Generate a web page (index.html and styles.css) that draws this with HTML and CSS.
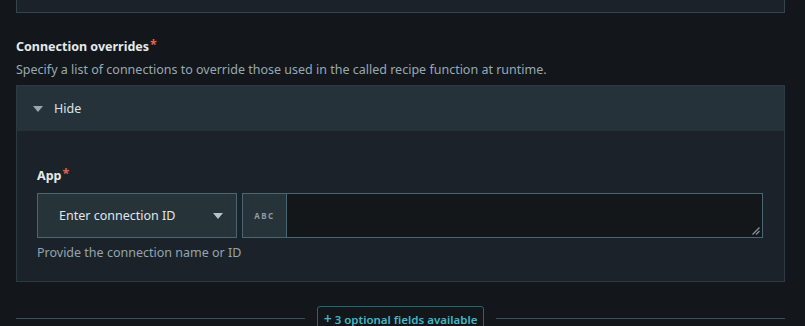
FILE: index.html
```html
<!DOCTYPE html>
<html>
<head>
<meta charset="utf-8">
<link rel="stylesheet" href="styles.css">
</head>
<body>
<div class="page">
  <div class="prev-box"></div>
  <div class="field-head">
    <div class="label">Connection overrides<span class="req">*</span></div>
    <div class="desc">Specify a list of connections to override those used in the called recipe function at runtime.</div>
  </div>
  <div class="accordion">
    <div class="acc-head">
      <svg class="tri" width="10" height="6" viewBox="0 0 10 6"><path d="M0 0H10L5 6Z" fill="#9aa7ae"/></svg>
      <span>Hide</span>
    </div>
    <div class="acc-body">
      <div class="label">App<span class="req">*</span></div>
      <div class="row">
        <div class="select">
          <span>Enter connection ID</span>
          <svg width="10" height="6" viewBox="0 0 10 6"><path d="M0 0H10L5 6Z" fill="#b9c3c9"/></svg>
        </div>
        <div class="group">
          <div class="prefix">ABC</div>
          <div class="textarea">
            <svg class="grip" width="9" height="9" viewBox="0 0 9 9"><path d="M8.5 1.5L1.5 8.5M8.5 5L5 8.5" stroke="#8a949a" stroke-width="1.2"/></svg>
          </div>
        </div>
      </div>
      <div class="hint">Provide the connection name or ID</div>
    </div>
  </div>
  <div class="more">
    <div class="line"></div>
    <div class="more-btn"><span class="plus">+</span> 3 optional fields available</div>
    <div class="line"></div>
  </div>
</div>
</body>
</html>
```
FILE: styles.css
```css
html, body {
  margin: 0;
  padding: 0;
  background: #13171b;
  height: 100%;
  overflow: hidden;
}
.page {
  padding: 0 20px 0 16px;
  font-family: "Noto Sans", "Open Sans", sans-serif;
  font-size: 12.5px;
  color: #dfe5e9;
}
.prev-box {
  height: 12px;
  background: #1c2229;
  border: 1px solid #344550;
  border-top: none;
}
.field-head {
  padding-top: 25px;
}
.label {
  font-weight: 700;
  font-size: 12.5px;
  line-height: 18px;
  color: #e4e9ec;
}
.req {
  color: #e4634e;
  margin-left: 1px;
  position: relative;
  top: -2px;
}
.desc {
  margin-top: 5px;
  line-height: 18px;
  color: #97a9b3;
}
.accordion {
  margin-top: 6px;
  border: 1px solid #2e3a42;
  background: #1c2229;
}
.acc-head {
  height: 45px;
  background: #263239;
  display: flex;
  align-items: center;
  padding-left: 16px;
  gap: 11px;
  color: #dce3e7;
}
.acc-body {
  padding: 36px 21px 19px 20px;
}
.row {
  display: flex;
  gap: 5px;
  margin-top: 8px;
  height: 45px;
}
.select {
  border: 1px solid #4a6673;
  background: #263339;
  display: flex;
  align-items: center;
  justify-content: space-between;
  padding: 0 13px 0 21px;
  box-sizing: border-box;
  width: 200px;
  color: #e0e6ea;
}
.group {
  flex: 1;
  display: flex;
  border: 1px solid #4a6673;
}
.prefix {
  width: 43px;
  background: #263339;
  border-right: 1px solid #4a6673;
  display: flex;
  align-items: center;
  justify-content: center;
  font-size: 8px;
  font-weight: 700;
  letter-spacing: 1.5px;
  color: #8d9ba2;
}
.textarea {
  flex: 1;
  background: #13171a;
  position: relative;
}
.grip {
  position: absolute;
  right: 2px;
  bottom: 2px;
}
.hint {
  margin-top: 6px;
  line-height: 18px;
  color: #93a5ae;
}
.more {
  display: flex;
  align-items: flex-start;
  margin-top: 24px;
}
.line {
  flex: 1;
  height: 1px;
  background: #3b4d57;
  margin-top: 12px;
}
.more-btn {
  margin: 0 12px;
  border: 1px solid #1d6a73;
  border-radius: 3px;
  padding: 4px 6px 6px 6px;
  color: #45b7c5;
  font-weight: 600;
  font-size: 11.5px;
  line-height: 16px;
}
.plus {
  font-size: 14px;
}
```
